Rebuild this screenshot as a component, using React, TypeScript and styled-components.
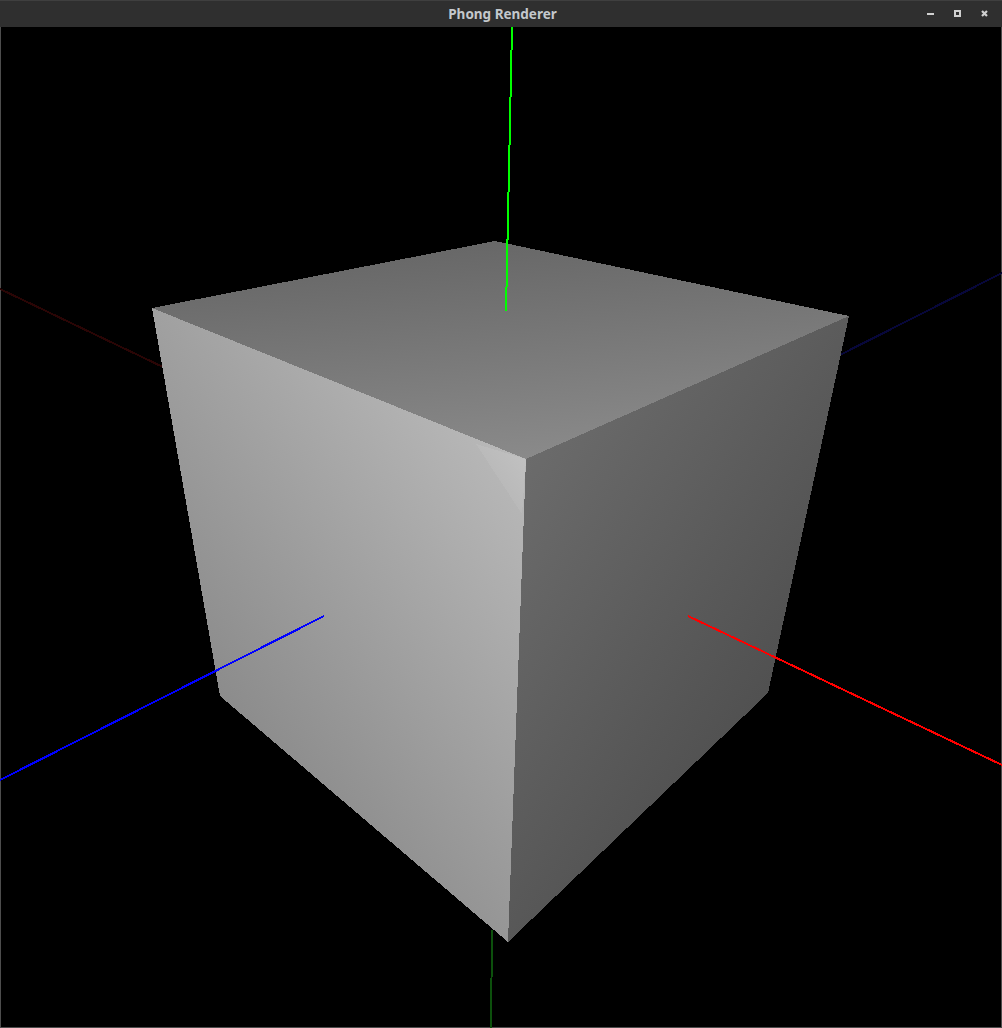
import * as React from 'react';
import styled, { createGlobalStyle } from 'styled-components';

const BAR_HEIGHT = 27;

interface IFace {
	id: string;
	points: number[][];
	from: number[]; // x, y, grey at gradient start
	to: number[]; // x, y, grey at gradient end
}

const GlobalStyle = createGlobalStyle`
	html, body {
		margin: 0;
		padding: 0;
		background: #000;
	}
`;

const Window = styled.div`
	display: flex;
	flex-direction: column;
	width: 1002px;
	height: 1028px;
	overflow: hidden;
	background: #000;
`;

const TitleBar = styled.div`
	position: relative;
	display: flex;
	align-items: center;
	justify-content: center;
	flex: 0 0 ${BAR_HEIGHT}px;
	box-sizing: border-box;
	padding-left: 3px;
	background: #2f2f2f;
	border-top: 1px solid #3f3f3f;
`;

const Title = styled.span`
	font-family: "Noto Sans", "Liberation Sans", sans-serif;
	font-size: 13.5px;
	font-weight: 700;
	color: #c4c8cc;
`;

const Controls = styled.div`
	position: absolute;
	top: 7px;
	right: 10px;
	display: flex;
	gap: 15px;
`;

const ControlIcon = styled.svg`
	display: block;
	width: 12px;
	height: 12px;
`;

const Viewport = styled.div`
	flex: 1;
	box-sizing: border-box;
	border: 1px solid #4d4d4d;
	border-top: none;
`;

const Scene = styled.svg`
	display: block;
	margin: 0 -1px -1px;
	width: 1002px;
	height: 1001px;
`;

const grey = (v: number) => `rgb(${v},${v},${v})`;

const Axis = ({ d, color }: { d: number[]; color: string }) => (
	<line x1={d[0]} y1={d[1] - BAR_HEIGHT} x2={d[2]} y2={d[3] - BAR_HEIGHT} stroke={color} strokeWidth={2} />
);

const Face = ({ face }: { face: IFace }) => (
	<>
		<linearGradient
			id={face.id}
			gradientUnits="userSpaceOnUse"
			x1={face.from[0]}
			y1={face.from[1] - BAR_HEIGHT}
			x2={face.to[0]}
			y2={face.to[1] - BAR_HEIGHT}
		>
			<stop offset="0" stopColor={grey(face.from[2])} />
			<stop offset="1" stopColor={grey(face.to[2])} />
		</linearGradient>
		<polygon points={face.points.map(p => `${p[0]},${p[1] - BAR_HEIGHT}`).join(' ')} fill={`url(#${face.id})`} />
	</>
);

const FACES: IFace[] = [
	{
		id: 'top',
		points: [[152, 308], [495, 241], [849, 316], [526, 459]],
		from: [495, 245, 104],
		to: [515, 460, 138]
	},
	{
		id: 'left',
		points: [[152, 308], [526, 459], [508, 942], [220, 696]],
		from: [222, 695, 140],
		to: [529, 470, 185]
	},
	{
		id: 'right',
		points: [[526, 459], [849, 316], [768, 693], [508, 942]],
		from: [765, 690, 81],
		to: [492, 517, 107]
	},
	{
		id: 'glint',
		points: [[476, 444], [526, 459], [522, 514]],
		from: [486, 492, 182],
		to: [524, 462, 192]
	}
];

export default function App() {
	return (
		<Window>
			<GlobalStyle />
			<TitleBar>
				<Title>Phong Renderer</Title>
				<Controls>
					<ControlIcon viewBox="0 0 12 12">
						<rect x="1" y="5" width="7" height="2" fill="#d0d0d0" />
					</ControlIcon>
					<ControlIcon viewBox="0 0 12 12">
						<path fillRule="evenodd" d="M1 2h7v7H1zM3 4v3h3V4z" fill="#d0d0d0" />
					</ControlIcon>
					<ControlIcon viewBox="0 0 12 12">
						<path d="M2 3l5 5M7 3L2 8" stroke="#d0d0d0" strokeWidth="2.2" fill="none" />
					</ControlIcon>
				</Controls>
			</TitleBar>
			<Viewport>
				<Scene viewBox="0 0 1002 1001" shapeRendering="crispEdges">
					<Axis d={[0, 289, 165, 368]} color="#2a0505" />
					<Axis d={[1002, 273, 830, 360]} color="#07073a" />
					<Axis d={[491, 1028, 492, 930]} color="#0c500c" />
					{FACES.map(face => <Face key={face.id} face={face} />)}
					<Axis d={[512, 27, 506, 311]} color="#00ff00" />
					<Axis d={[324, 616, 0, 780]} color="#0000ff" />
					<Axis d={[688, 616, 1002, 765]} color="#ff0000" />
				</Scene>
			</Viewport>
		</Window>
	);
}
